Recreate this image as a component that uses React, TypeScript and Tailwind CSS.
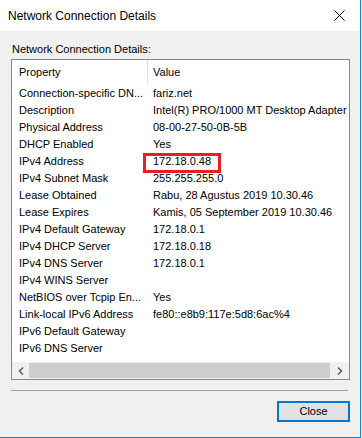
import React from "react";

const rows: [string, string][] = [
  ["Connection-specific DN...", "fariz.net"],
  ["Description", "Intel(R) PRO/1000 MT Desktop Adapter"],
  ["Physical Address", "08-00-27-50-0B-5B"],
  ["DHCP Enabled", "Yes"],
  ["IPv4 Address", "172.18.0.48"],
  ["IPv4 Subnet Mask", "255.255.255.0"],
  ["Lease Obtained", "Rabu, 28 Agustus 2019 10.30.46"],
  ["Lease Expires", "Kamis, 05 September 2019 10.30.46"],
  ["IPv4 Default Gateway", "172.18.0.1"],
  ["IPv4 DHCP Server", "172.18.0.18"],
  ["IPv4 DNS Server", "172.18.0.1"],
  ["IPv4 WINS Server", ""],
  ["NetBIOS over Tcpip En...", "Yes"],
  ["Link-local IPv6 Address", "fe80::e8b9:117e:5d8:6ac%4"],
  ["IPv6 Default Gateway", ""],
  ["IPv6 DNS Server", ""],
];

export default function App() {
  return (
    <div
      className="w-[361px] h-[438px] flex flex-col bg-[#f0f0f0] border-r border-b border-[#1883d7] text-black"
      style={{ fontFamily: '"Liberation Sans", Arial, sans-serif' }}
    >
      <div className="h-[31px] bg-white flex items-center justify-between pl-[8px] pr-[15px]">
        <span className="text-[12px] leading-none">Network Connection Details</span>
        <svg width="11" height="11" viewBox="0 0 11 11">
          <path d="M0.5 0.5 L10.5 10.5 M10.5 0.5 L0.5 10.5" stroke="#000" strokeWidth="1" />
        </svg>
      </div>
      <div className="flex flex-col pl-[11px]">
        <div className="mt-[10px] h-[16px] flex items-center pl-[1px] text-[11px]">
          Network Connection Details:
        </div>
        <div className="relative mt-[2px] w-[339px] h-[321px] border border-[#828790] bg-white flex flex-col text-[11px]">
          <div className="h-[25px] flex items-center shrink-0">
            <div className="w-[135px] h-full flex items-center pl-[7px]">Property</div>
            <div className="w-px h-full bg-[#e5e5e5]" />
            <div className="pl-[5px]">Value</div>
          </div>
          {rows.map(([k, v]) => (
            <div key={k} className="h-[17px] flex items-center shrink-0 whitespace-nowrap">
              <div className="w-[141px] pl-[7px]">{k}</div>
              <div>{v}</div>
            </div>
          ))}
          <div className="flex-1" />
          <div className="h-[17px] flex bg-[#f0f0f0] shrink-0">
            <div className="w-[17px] flex items-center justify-center">
              <svg width="6" height="8" viewBox="0 0 6 8">
                <path d="M5 0.5 L1.5 4 L5 7.5" stroke="#606060" strokeWidth="1.6" fill="none" />
              </svg>
            </div>
            <div className="flex-1 my-[1px] bg-[#cdcdcd]" />
            <div className="w-[19px] flex items-center justify-center">
              <svg width="6" height="8" viewBox="0 0 6 8">
                <path d="M1 0.5 L4.5 4 L1 7.5" stroke="#606060" strokeWidth="1.6" fill="none" />
              </svg>
            </div>
          </div>
          <div className="absolute left-[131px] top-[93px] w-[78px] h-[20px] border-[3px] border-[#ec1c24]" />
        </div>
        <div className="mt-[10px] w-[337px] h-px bg-[#a0a0a0]" />
        <div className="mt-[10px] flex justify-end w-[339px]">
          <button className="w-[73px] h-[21px] border-2 border-[#0078d7] bg-[#e1e1e1] text-[11px] flex items-center justify-center">
            Close
          </button>
        </div>
      </div>
    </div>
  );
}
